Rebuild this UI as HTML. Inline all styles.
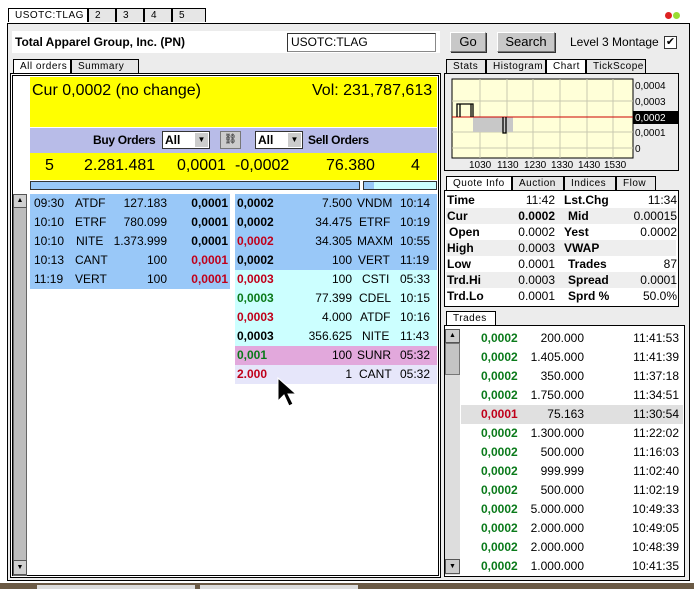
<!DOCTYPE html>
<html><head><meta charset="utf-8"><style>
*{box-sizing:border-box;margin:0;padding:0}
body{width:694px;height:589px;background:#fff;font-family:"Liberation Sans",sans-serif;font-size:12px;position:relative;overflow:hidden;color:#000}
.a{position:absolute}
.tab{position:absolute;height:14px;border:1px solid #000;border-bottom:none;background:#e6e6e6;font-size:10px;line-height:13px;padding-left:6px;letter-spacing:.5px}
.tab.s{background:#fff}
.row{position:absolute;left:0;height:19px;line-height:19px;font-size:12px;white-space:nowrap}
.row span{position:absolute}
.b{font-weight:bold}
.r{color:#c0001a}.g{color:#0a7a1a}
.btn{position:absolute;background:#c8c8c8;border:1px solid #777;border-top-color:#fff;border-left-color:#fff;text-align:center;font-size:13px;line-height:18px;box-shadow:1px 1px 0 #333}
.q{position:absolute;left:447px;width:230px;height:16px;line-height:16px;font-size:12px}
.q span{position:absolute}
</style></head><body>
<div class="tab s" style="left:8px;top:8px;width:80px">USOTC:TLAG</div>
<div class="tab" style="left:88px;top:8px;width:28px">2</div>
<div class="tab" style="left:116px;top:8px;width:28px">3</div>
<div class="tab" style="left:144px;top:8px;width:28px">4</div>
<div class="tab" style="left:172px;top:8px;width:34px">5</div>
<div class="a" style="left:665px;top:12px;width:7px;height:7px;border-radius:50%;background:#d22"></div>
<div class="a" style="left:673px;top:12px;width:7px;height:7px;border-radius:50%;background:#9d3"></div>
<div class="a" style="left:7px;top:23px;width:683px;height:558px;border:1px solid #000;background:#ececec"></div>
<div class="a" style="left:12px;top:31px;width:428px;height:22px;background:#fff"></div>
<div class="a b" style="left:15px;top:35px;font-size:12px">Total Apparel Group, Inc. (PN)</div>
<div class="a" style="left:287px;top:33px;width:149px;height:19px;background:#fff;border:1px solid #888;border-top-color:#333;border-left-color:#333;font-size:12px;line-height:17px;padding-left:3px">USOTC:TLAG</div>
<div class="btn" style="left:450px;top:32px;width:36px;height:20px">Go</div>
<div class="btn" style="left:497px;top:32px;width:58px;height:20px">Search</div>
<div class="a" style="left:570px;top:35px;font-size:12px">Level 3 Montage</div>
<div class="a" style="left:664px;top:36px;width:13px;height:13px;background:#fff;border:1px solid #333;font-size:11px;line-height:11px;text-align:center">✔</div>
<div class="tab s" style="left:13px;top:59px;width:58px">All orders</div>
<div class="tab" style="left:71px;top:59px;width:68px">Summary</div>
<div class="a" style="left:10px;top:73px;width:431px;height:505px;border:1px solid #000;background:#fff;outline:1px solid #000;outline-offset:-3px"></div>
<div class="a" style="left:30px;top:77px;width:407px;height:50px;background:#ffff00"></div>
<div class="a" style="left:32px;top:82px;font-size:16px">Cur 0,0002 (no change)</div>
<div class="a" style="left:312px;top:82px;font-size:16px">Vol: 231,787,613</div>
<div class="a" style="left:30px;top:128px;width:407px;height:25px;background:#b8bce8"></div>
<div class="a b" style="left:93px;top:133px;font-size:12px;letter-spacing:-0.3px">Buy Orders</div>
<div class="a" style="left:162px;top:131px;width:48px;height:18px;background:#fff;border:1px solid #333;font-size:12px;font-weight:bold;padding-left:2px;line-height:16px">All<span style="position:absolute;right:1px;top:1px;width:13px;height:14px;background:#ccc;font-size:8px;text-align:center;line-height:14px">▼</span></div>
<div class="a" style="left:220px;top:131px;width:21px;height:18px;background:#ccc;border:1px solid #777;font-size:10px;text-align:center;line-height:16px">⛓</div>
<div class="a" style="left:255px;top:131px;width:48px;height:18px;background:#fff;border:1px solid #333;font-size:12px;font-weight:bold;padding-left:2px;line-height:16px">All<span style="position:absolute;right:1px;top:1px;width:13px;height:14px;background:#ccc;font-size:8px;text-align:center;line-height:14px">▼</span></div>
<div class="a b" style="left:308px;top:133px;font-size:12px;letter-spacing:-0.3px">Sell Orders</div>
<div class="a" style="left:30px;top:153px;width:407px;height:27px;background:#ffff00"></div>
<div class="a" style="left:30px;top:157px;width:407px;font-size:16px;height:20px">
<span class="a" style="left:15px">5</span><span class="a" style="left:54px">2.281.481</span><span class="a" style="left:147px">0,0001</span><span class="a" style="left:205px">-0,0002</span><span class="a" style="left:296px">76.380</span><span class="a" style="left:381px">4</span></div>
<div class="a" style="left:30px;top:181px;width:330px;height:9px;background:#99c8f8;border:1px solid #333"></div>
<div class="a" style="left:363px;top:181px;width:74px;height:9px;background:#ccffff;border:1px solid #333"><div style="width:10px;height:7px;background:#99c8f8"></div></div>
<div class="a" style="left:13px;top:194px;width:14px;height:382px;background:#bdbdbd;border:1px solid #666"></div>
<div class="a" style="left:13px;top:194px;width:14px;height:14px;background:#d0d0d0;border:1px solid #555;font-size:7px;text-align:center;line-height:12px">▲</div>
<div class="a" style="left:13px;top:560px;width:14px;height:15px;background:#d0d0d0;border:1px solid #555;font-size:7px;text-align:center;line-height:13px">▼</div>
<div class="a" style="left:30px;top:194px;width:200px;height:95px;background:#99c8f8"></div>
<div class="a" style="left:235px;top:194px;width:202px;height:76px;background:#99c8f8"></div>
<div class="a" style="left:235px;top:270px;width:202px;height:76px;background:#ccffff"></div>
<div class="a" style="left:235px;top:346px;width:202px;height:19px;background:#e2a8dc"></div>
<div class="a" style="left:235px;top:365px;width:202px;height:19px;background:#e6e6fa"></div>
<div class="row" style="top:194px;width:440px"><span style="left:34px">09:30</span><span style="left:75px">ATDF</span><span style="right:273px">127.183</span><span class="b" style="right:212px">0,0001</span><span class="b" style="left:237px">0,0002</span><span style="right:88px">7.500</span><span style="left:357px">VNDM</span><span style="left:400px">10:14</span></div>
<div class="row" style="top:213px;width:440px"><span style="left:34px">10:10</span><span style="left:75px">ETRF</span><span style="right:273px">780.099</span><span class="b" style="right:212px">0,0001</span><span class="b" style="left:237px">0,0002</span><span style="right:88px">34.475</span><span style="left:359px">ETRF</span><span style="left:400px">10:19</span></div>
<div class="row" style="top:232px;width:440px"><span style="left:34px">10:10</span><span style="left:76px">NITE</span><span style="right:273px">1.373.999</span><span class="b" style="right:212px">0,0001</span><span class="b r" style="left:237px">0,0002</span><span style="right:88px">34.305</span><span style="left:357px">MAXM</span><span style="left:400px">10:55</span></div>
<div class="row" style="top:251px;width:440px"><span style="left:34px">10:13</span><span style="left:75px">CANT</span><span style="right:273px">100</span><span class="b r" style="right:212px">0,0001</span><span class="b" style="left:237px">0,0002</span><span style="right:88px">100</span><span style="left:358px">VERT</span><span style="left:400px">11:19</span></div>
<div class="row" style="top:270px;width:440px"><span style="left:34px">11:19</span><span style="left:75px">VERT</span><span style="right:273px">100</span><span class="b r" style="right:212px">0,0001</span><span class="b r" style="left:237px">0,0003</span><span style="right:88px">100</span><span style="left:362px">CSTI</span><span style="left:400px">05:33</span></div>
<div class="row" style="top:289px;width:440px"><span class="b g" style="left:237px">0,0003</span><span style="right:88px">77.399</span><span style="left:359px">CDEL</span><span style="left:400px">10:15</span></div>
<div class="row" style="top:308px;width:440px"><span class="b r" style="left:237px">0,0003</span><span style="right:88px">4.000</span><span style="left:360px">ATDF</span><span style="left:400px">10:16</span></div>
<div class="row" style="top:327px;width:440px"><span class="b" style="left:237px">0,0003</span><span style="right:88px">356.625</span><span style="left:362px">NITE</span><span style="left:400px">11:43</span></div>
<div class="row" style="top:346px;width:440px"><span class="b g" style="left:237px">0,001</span><span style="right:88px">100</span><span style="left:357px">SUNR</span><span style="left:400px">05:32</span></div>
<div class="row" style="top:365px;width:440px"><span class="b r" style="left:237px">2.000</span><span style="right:88px">1</span><span style="left:359px">CANT</span><span style="left:400px">05:32</span></div>
<svg class="a" style="left:277px;top:377px" width="22" height="32"><path d="M1 1 L1 24 L7 18 L12 29 L16 27 L11 17 L19 17 Z" fill="#000" stroke="#fff" stroke-width="1"/></svg>
<div class="tab" style="left:446px;top:59px;width:40px">Stats</div>
<div class="tab" style="left:486px;top:59px;width:60px">Histogram</div>
<div class="tab s" style="left:546px;top:59px;width:40px">Chart</div>
<div class="tab" style="left:586px;top:59px;width:60px">TickScope</div>
<div class="a" style="left:444px;top:73px;width:235px;height:98px;border:1px solid #000;background:#ececec"></div>
<svg class="a" style="left:444px;top:73px" width="235" height="98">
<rect x="8" y="6" width="181" height="79" fill="#ffffd8" stroke="#000"/>
<g stroke="#c8c8b0"><line x1="36" y1="6" x2="36" y2="85"/><line x1="63" y1="6" x2="63" y2="85"/><line x1="89" y1="6" x2="89" y2="85"/><line x1="116" y1="6" x2="116" y2="85"/><line x1="143" y1="6" x2="143" y2="85"/><line x1="169" y1="6" x2="169" y2="85"/>
<line x1="8" y1="28" x2="189" y2="28"/><line x1="8" y1="59" x2="189" y2="59"/><line x1="8" y1="75" x2="189" y2="75"/></g>
<rect x="29" y="44" width="40" height="15" fill="#c8c8c8"/>
<line x1="8" y1="44" x2="189" y2="44" stroke="#c00"/>
<path d="M13 44 V31 H29 V44 M16 31 V44 M27 31 V44 M59 44 V60 H62 V44" fill="none" stroke="#000" stroke-width="1.3"/>
<g font-size="10" font-family="Liberation Sans"><text x="191" y="16">0,0004</text><text x="191" y="32">0,0003</text><rect x="189" y="38" width="45" height="13" fill="#000"/><text x="191" y="48" fill="#fff">0,0002</text><text x="191" y="63">0,0001</text><text x="191" y="79">0</text>
<text x="25" y="95">1030</text><text x="53" y="95">1130</text><text x="80" y="95">1230</text><text x="107" y="95">1330</text><text x="134" y="95">1430</text><text x="160" y="95">1530</text></g>
</svg>
<div class="tab s" style="left:446px;top:176px;width:66px">Quote Info</div>
<div class="tab" style="left:512px;top:176px;width:52px">Auction</div>
<div class="tab" style="left:564px;top:176px;width:52px">Indices</div>
<div class="tab" style="left:616px;top:176px;width:40px">Flow</div>
<div class="a" style="left:444px;top:190px;width:235px;height:117px;border:1px solid #000;background:#fff"></div>
<div class="a" style="left:446px;top:208px;width:230px;height:16px;background:#eee"></div>
<div class="a" style="left:446px;top:240px;width:230px;height:16px;background:#eee"></div>
<div class="a" style="left:446px;top:272px;width:230px;height:16px;background:#eee"></div>
<div class="q" style="top:192px"><span class="b">Time</span><span style="right:122px">11:42</span><span class="b" style="left:117px">Lst.Chg</span><span style="right:0">11:34</span></div>
<div class="q" style="top:208px"><span class="b">Cur</span><span class="b" style="right:122px">0.0002</span><span class="b" style="left:121px">Mid</span><span style="right:0">0.00015</span></div>
<div class="q" style="top:224px"><span class="b" style="left:2px">Open</span><span style="right:122px">0.0002</span><span class="b" style="left:117px">Yest</span><span style="right:0">0.0002</span></div>
<div class="q" style="top:240px"><span class="b">High</span><span style="right:122px">0.0003</span><span class="b" style="left:117px">VWAP</span></div>
<div class="q" style="top:256px"><span class="b">Low</span><span style="right:122px">0.0001</span><span class="b" style="left:121px">Trades</span><span style="right:0">87</span></div>
<div class="q" style="top:272px"><span class="b">Trd.Hi</span><span style="right:122px">0.0003</span><span class="b" style="left:121px">Spread</span><span style="right:0">0.0001</span></div>
<div class="q" style="top:288px"><span class="b">Trd.Lo</span><span style="right:122px">0.0001</span><span class="b" style="left:121px">Sprd %</span><span style="right:0">50.0%</span></div>
<div class="tab s" style="left:446px;top:311px;width:50px">Trades</div>
<div class="a" style="left:444px;top:325px;width:241px;height:252px;border:1px solid #000;background:#fff"></div>
<div class="a" style="left:445px;top:329px;width:15px;height:246px;background:#ddd"></div>
<div class="a" style="left:445px;top:329px;width:15px;height:14px;background:#ccc;border:1px solid #555;font-size:7px;text-align:center;line-height:12px">▲</div>
<div class="a" style="left:445px;top:343px;width:15px;height:32px;background:#c4c4c4;border:1px solid #777"></div>
<div class="a" style="left:445px;top:559px;width:15px;height:15px;background:#ccc;border:1px solid #555;font-size:7px;text-align:center;line-height:13px">▼</div>
<div class="a" style="left:461px;top:405px;width:222px;height:19px;background:#e0e0e0"></div>
<div class="a" style="left:0;top:329px;width:694px;height:250px">
<div class="row" style="top:0;width:694px"><span class="b g" style="left:481px">0,0002</span><span style="right:110px">200.000</span><span style="right:15px">11:41:53</span></div>
<div class="row" style="top:19px;width:694px"><span class="b g" style="left:481px">0,0002</span><span style="right:110px">1.405.000</span><span style="right:15px">11:41:39</span></div>
<div class="row" style="top:38px;width:694px"><span class="b g" style="left:481px">0,0002</span><span style="right:110px">350.000</span><span style="right:15px">11:37:18</span></div>
<div class="row" style="top:57px;width:694px"><span class="b g" style="left:481px">0,0002</span><span style="right:110px">1.750.000</span><span style="right:15px">11:34:51</span></div>
<div class="row" style="top:76px;width:694px"><span class="b r" style="left:481px">0,0001</span><span style="right:110px">75.163</span><span style="right:15px">11:30:54</span></div>
<div class="row" style="top:95px;width:694px"><span class="b g" style="left:481px">0,0002</span><span style="right:110px">1.300.000</span><span style="right:15px">11:22:02</span></div>
<div class="row" style="top:114px;width:694px"><span class="b g" style="left:481px">0,0002</span><span style="right:110px">500.000</span><span style="right:15px">11:16:03</span></div>
<div class="row" style="top:133px;width:694px"><span class="b g" style="left:481px">0,0002</span><span style="right:110px">999.999</span><span style="right:15px">11:02:40</span></div>
<div class="row" style="top:152px;width:694px"><span class="b g" style="left:481px">0,0002</span><span style="right:110px">500.000</span><span style="right:15px">11:02:19</span></div>
<div class="row" style="top:171px;width:694px"><span class="b g" style="left:481px">0,0002</span><span style="right:110px">5.000.000</span><span style="right:15px">10:49:33</span></div>
<div class="row" style="top:190px;width:694px"><span class="b g" style="left:481px">0,0002</span><span style="right:110px">2.000.000</span><span style="right:15px">10:49:05</span></div>
<div class="row" style="top:209px;width:694px"><span class="b g" style="left:481px">0,0002</span><span style="right:110px">2.000.000</span><span style="right:15px">10:48:39</span></div>
<div class="row" style="top:228px;width:694px"><span class="b g" style="left:481px">0,0002</span><span style="right:110px">1.000.000</span><span style="right:15px">10:41:35</span></div>
</div>
<div class="a" style="left:0;top:583px;width:694px;height:6px;background:#6b5a45"></div>
<div class="a" style="left:37px;top:585px;width:158px;height:4px;background:#ddd"></div>
<div class="a" style="left:200px;top:585px;width:158px;height:4px;background:#ddd"></div>
</body></html>
